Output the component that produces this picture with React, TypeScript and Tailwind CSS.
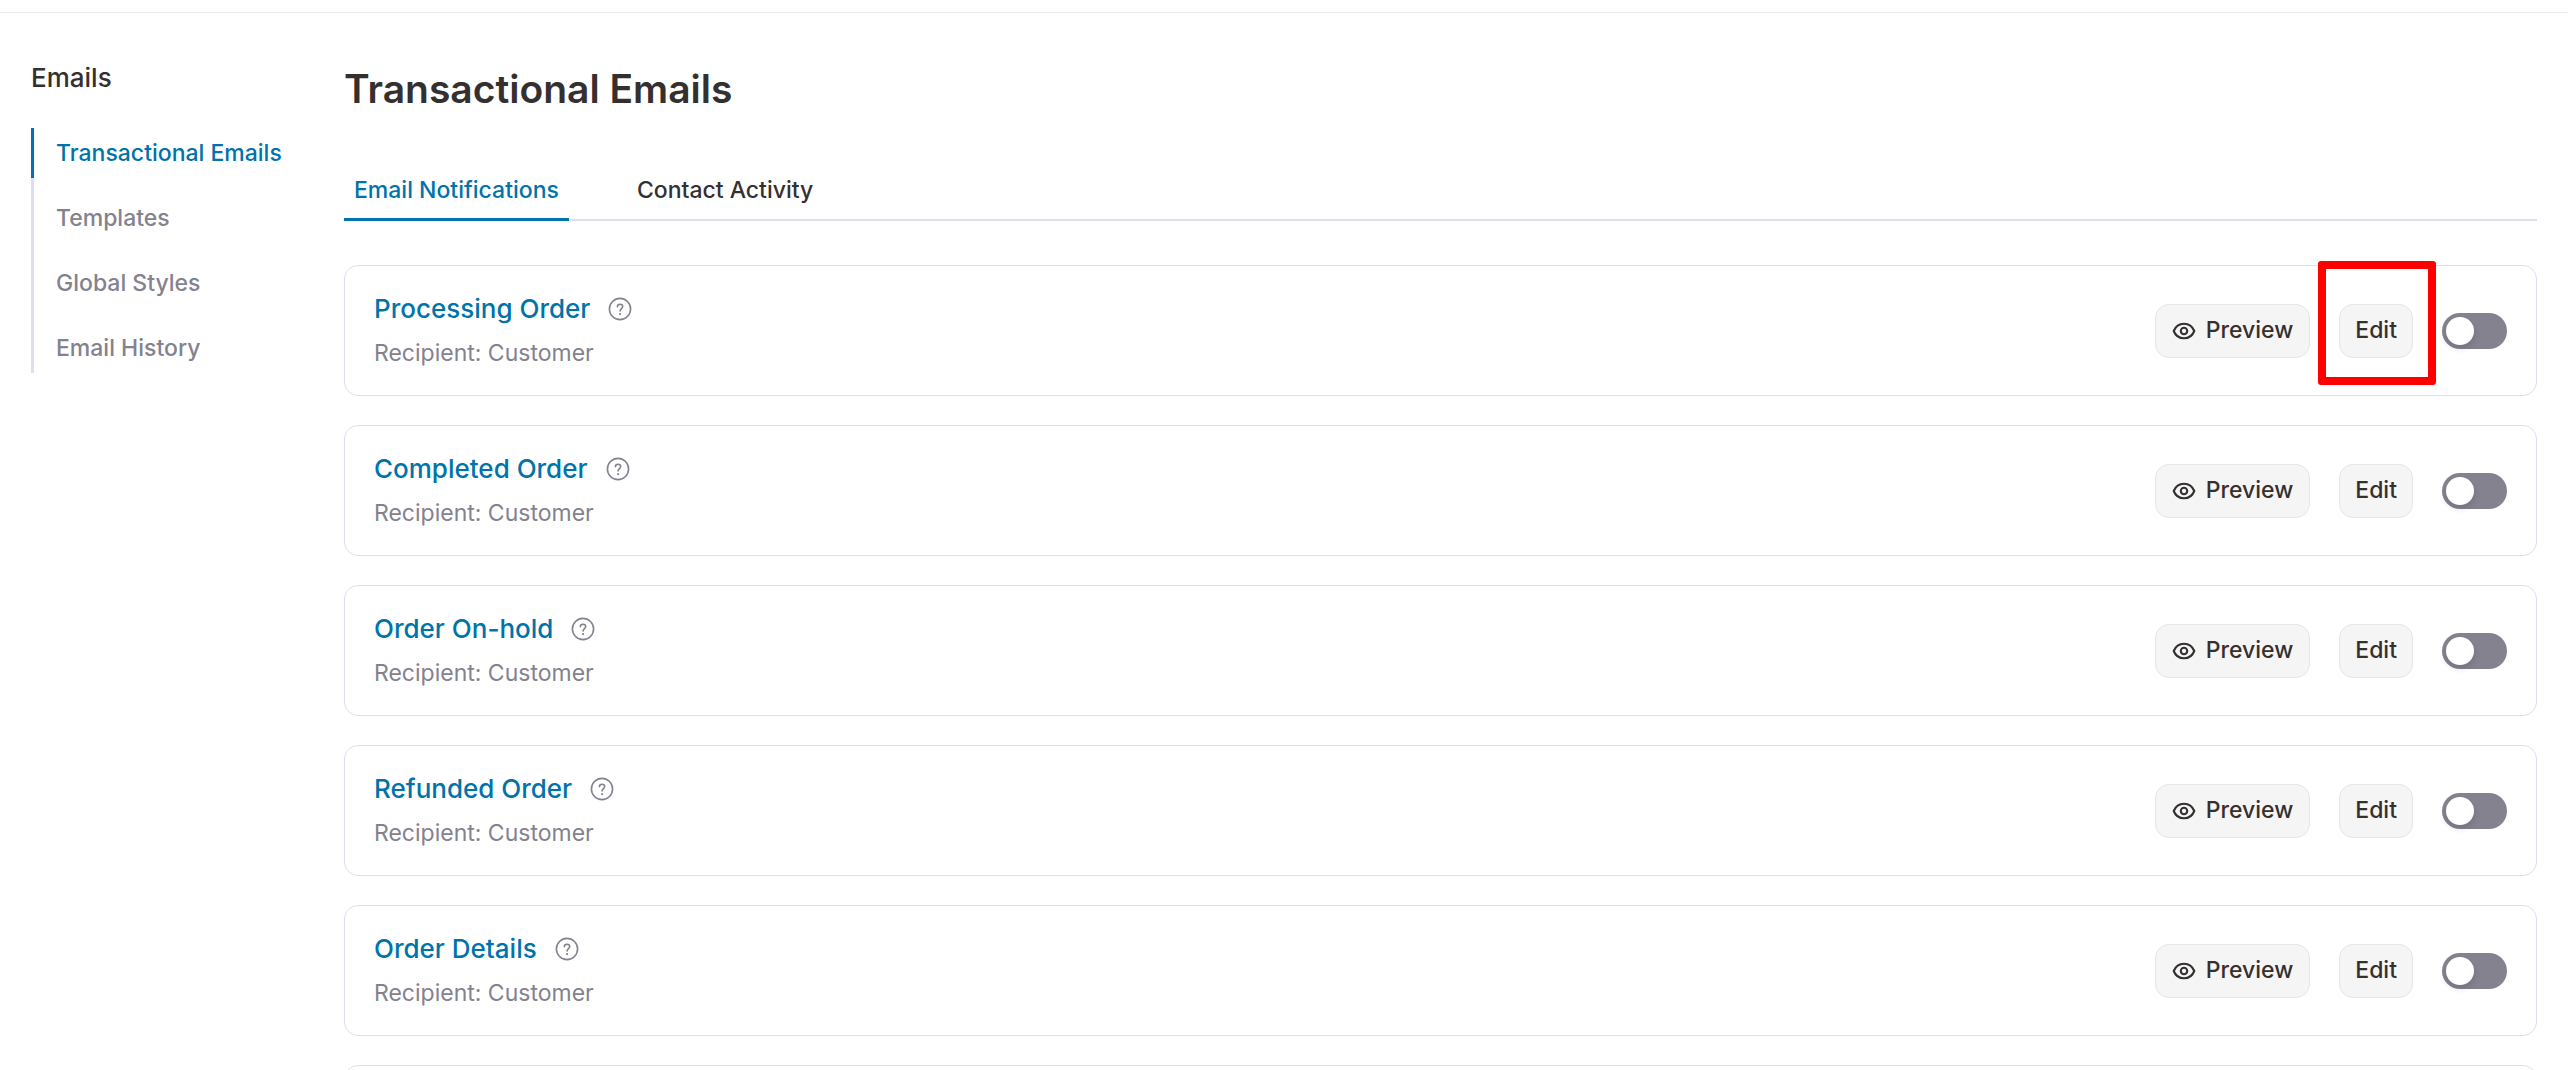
import React, { useState } from 'react';

interface EmailNotification {
  id: string;
  title: string;
  recipient: string;
}

const navItems = ['Transactional Emails', 'Templates', 'Global Styles', 'Email History'];

const tabs = ['Email Notifications', 'Contact Activity'];

const notifications: EmailNotification[] = [
  { id: 'processing', title: 'Processing Order', recipient: 'Customer' },
  { id: 'completed', title: 'Completed Order', recipient: 'Customer' },
  { id: 'on-hold', title: 'Order On-hold', recipient: 'Customer' },
  { id: 'refunded', title: 'Refunded Order', recipient: 'Customer' },
  { id: 'details', title: 'Order Details', recipient: 'Customer' },
];

const HelpIcon: React.FC = () => (
  <svg width="24" height="24" viewBox="0 0 24 24" fill="none" stroke="currentColor" strokeWidth="1.6" aria-hidden="true">
    <circle cx="12" cy="12" r="10.6" />
    <path d="M9.4 9.7c0-1.500 1.100-2.500 2.600-2.500s2.700.9 2.700 2.400c0 2-2.600 2-2.600 4.400" strokeLinecap="round" />
    <circle cx="12.1" cy="17.100" r="1.100" fill="currentColor" stroke="none" />
  </svg>
);

const EyeIcon: React.FC = () => (
  <svg width="24" height="24" viewBox="0 0 24 24" fill="none" stroke="currentColor" strokeWidth="2.1" aria-hidden="true">
    <path d="M1.7 12C3.600 7.200 7.400 4.700 12 4.700S20.400 7.200 22.300 12C20.400 16.800 16.600 19.300 12 19.300S3.600 16.800 1.700 12z" strokeLinejoin="round" />
    <circle cx="12" cy="12" r="3.200" />
  </svg>
);

/**
 * Side navigation of the emails section
 */
const Sidebar: React.FC = () => {
  const [current, setCurrent] = useState(navItems[0]);

  return (
    <aside className="w-[313px] shrink-0 pt-[50px]">
      <h2 className="mb-[35px] text-[26px] leading-[30px] font-medium">Emails</h2>
      <ul className="flex flex-col gap-[15px] border-l-3 border-[#dfdeee]">
        {navItems.map(item => (
          <li key={item}>
            <a
              href="#"
              onClick={() => setCurrent(item)}
              className={
                item === current
                  ? '-ml-[3px] block border-l-3 border-[#0073aa] pl-[22px] leading-[50px] font-medium text-[#0073aa]'
                  : 'block pl-[22px] leading-[50px] font-medium text-[#84828f]'
              }
            >
              {item}
            </a>
          </li>
        ))}
      </ul>
    </aside>
  );
};

/**
 * One notification with its actions
 */
const NotificationCard: React.FC<{ item: EmailNotification; highlighted: boolean }> = ({ item, highlighted }) => {
  const [enabled, setEnabled] = useState(false);

  return (
    <li className="flex h-[131px] items-center justify-between rounded-[14px] border border-[#dfdeea] px-[29px]">
      <div className="flex flex-col gap-[10px]">
        <div className="flex items-center gap-[18px]">
          <h3 className="text-[26px] leading-[34px] font-medium text-[#0073aa]">{item.title}</h3>
          <button type="button" aria-label={`About ${item.title}`} className="text-[#84828f]">
            <HelpIcon />
          </button>
        </div>
        <p className="leading-[34px] text-[#84828f]">Recipient: {item.recipient}</p>
      </div>

      <div className="flex items-center gap-[29px]">
        <button
          type="button"
          className="flex h-[54px] items-center gap-[10px] rounded-[14px] border border-[#e6e6e6] bg-[#f5f5f5] px-4 font-medium"
        >
          <EyeIcon />
          Preview
        </button>
        <div className="relative">
          <button
            type="button"
            className="block h-[54px] rounded-[14px] border border-[#e6e6e6] bg-[#f5f5f5] px-[15px] font-medium"
          >
            Edit
          </button>
          {highlighted && (
            <span className="pointer-events-none absolute -top-[43px] -right-[23px] -bottom-[27px] -left-[21px] rounded-[3px] border-8 border-[#ff0000]" />
          )}
        </div>
        <label className="relative block h-9 w-[65px] cursor-pointer">
          <input
            type="checkbox"
            role="switch"
            aria-label={`Enable ${item.title}`}
            checked={enabled}
            onChange={e => setEnabled(e.target.checked)}
            className="peer block h-9 w-[65px] appearance-none rounded-full bg-[#84828f] checked:bg-[#0073aa]"
          />
          <span className="absolute top-1 left-1 size-7 rounded-full bg-white shadow-[0_4px_6px_rgba(0,0,0,0.12)] peer-checked:left-[33px]" />
        </label>
      </div>
    </li>
  );
};

const App: React.FC = () => {
  const [activeTab, setActiveTab] = useState(tabs[0]);

  return (
    <div className="h-screen overflow-hidden bg-white font-['Inter',sans-serif] text-[23px] text-[#353030]">
      <div className="h-[13px] border-b border-[#ebebeb]" />
      <div className="flex px-[31px]">
        <Sidebar />

        <main className="min-w-0 flex-1 pt-[52px]">
          <h1 className="mb-[60px] text-[39px] leading-[48px] font-semibold">Transactional Emails</h1>

          {/* Tabs */}
          <div role="tablist" className="flex gap-[58px] shadow-[inset_0_-2px_0_#dfdeee]">
            {tabs.map(tab => (
              <button
                key={tab}
                type="button"
                role="tab"
                aria-selected={tab === activeTab}
                onClick={() => setActiveTab(tab)}
                className={
                  tab === activeTab
                    ? 'border-b-3 border-[#0073aa] px-[10px] pb-[11px] leading-[34px] font-medium text-[#0073aa]'
                    : 'border-b-3 border-transparent px-[10px] pb-[11px] leading-[34px] font-medium'
                }
              >
                {tab}
              </button>
            ))}
          </div>

          {/* Notification list */}
          <ul className="mt-11 flex flex-col gap-[29px]">
            {notifications.map((item, index) => (
              <NotificationCard key={item.id} item={item} highlighted={index === 0} />
            ))}
            {/* Placeholder for the next card */}
            <li aria-hidden="true" className="h-[131px] rounded-[14px] border border-[#dfdeea]" />
          </ul>
        </main>
      </div>
    </div>
  );
};

export default App;
